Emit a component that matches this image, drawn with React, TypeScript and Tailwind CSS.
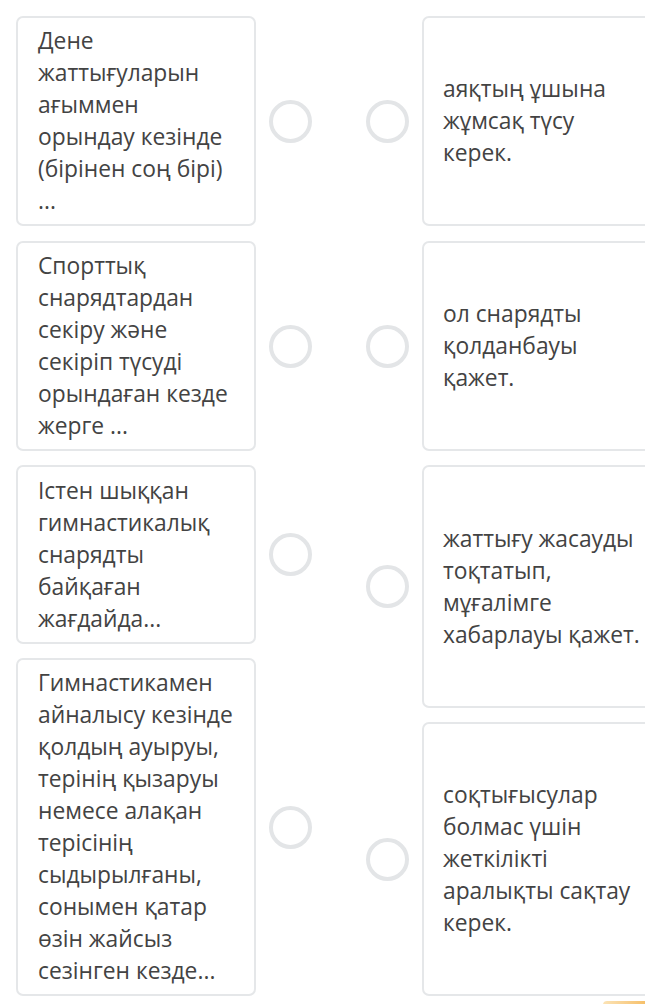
const left = [
  { h: "h-[210px]", mt: "", lines: ["Дене", "жаттығуларын", "ағыммен", "орындау кезінде", "(бірінен соң бірі)", "..."] },
  { h: "h-[210px]", mt: "mt-[15px]", lines: ["Спорттық", "снарядтардан", "секіру және", "секіріп түсуді", "орындаған кезде", "жерге ..."] },
  { h: "h-[179px]", mt: "mt-[14px]", lines: ["Істен шыққан", "гимнастикалық", "снарядты", "байқаған", "жағдайда..."] },
  { h: "h-[338px]", mt: "mt-[14px]", lines: ["Гимнастикамен", "айналысу кезінде", "қолдың ауыруы,", "терінің қызаруы", "немесе алақан", "терісінің", "сыдырылғаны,", "сонымен қатар", "өзін жайсыз", "сезінген кезде..."] },
];

const right = [
  { h: "h-[210px]", mt: "", lines: ["аяқтың ұшына", "жұмсақ түсу", "керек."] },
  { h: "h-[210px]", mt: "mt-[15px]", lines: ["ол снарядты", "қолданбауы", "қажет."] },
  { h: "h-[243px]", mt: "mt-[14px]", lines: ["жаттығу жасауды", "тоқтатып,", "мұғалімге", "хабарлауы қажет."] },
  { h: "h-[274px]", mt: "mt-[14px]", lines: ["соқтығысулар", "болмас үшін", "жеткілікті", "аралықты сақтау", "керек."] },
];

function Circle() {
  return <div className="w-[43px] h-[43px] shrink-0 rounded-full border-[4px] border-[#e3e5e7] bg-white" />;
}

function CardText({ lines }: { lines: string[] }) {
  return (
    <div className="text-[22.8px] leading-[32px] text-[#434343]">
      {lines.map((l, i) => (
        <div key={i} className="whitespace-nowrap">
          {l}
        </div>
      ))}
    </div>
  );
}

export default function App() {
  return (
    <div className="w-[645px] h-[1004px] overflow-hidden bg-white font-['Open_Sans',sans-serif]">
      <div className="flex pt-[16px] pl-[16px]">
        <div className="flex flex-col">
          {left.map((c, i) => (
            <div key={i} className={`flex items-center ${c.mt}`}>
              <div className={`w-[240px] ${c.h} flex items-center px-[20px] border-2 border-[#e5e7e9] rounded-[7px]`}>
                <CardText lines={c.lines} />
              </div>
              <div className="ml-[13px]">
                <Circle />
              </div>
            </div>
          ))}
        </div>
        <div className="flex flex-col ml-[54px]">
          {right.map((c, i) => (
            <div key={i} className={`flex items-center ${c.mt}`}>
              <Circle />
              <div className={`ml-[13px] w-[240px] shrink-0 ${c.h} flex items-center px-[19px] border-2 border-[#e5e7e9] rounded-[7px]`}>
                <CardText lines={c.lines} />
              </div>
            </div>
          ))}
        </div>
      </div>
      <div className="flex justify-end mt-[5px]">
        <div className="w-[42px] h-[10px] rounded-tl-[4px] bg-gradient-to-r from-[#fbe3b5] to-[#f6c06a]" />
      </div>
    </div>
  );
}
